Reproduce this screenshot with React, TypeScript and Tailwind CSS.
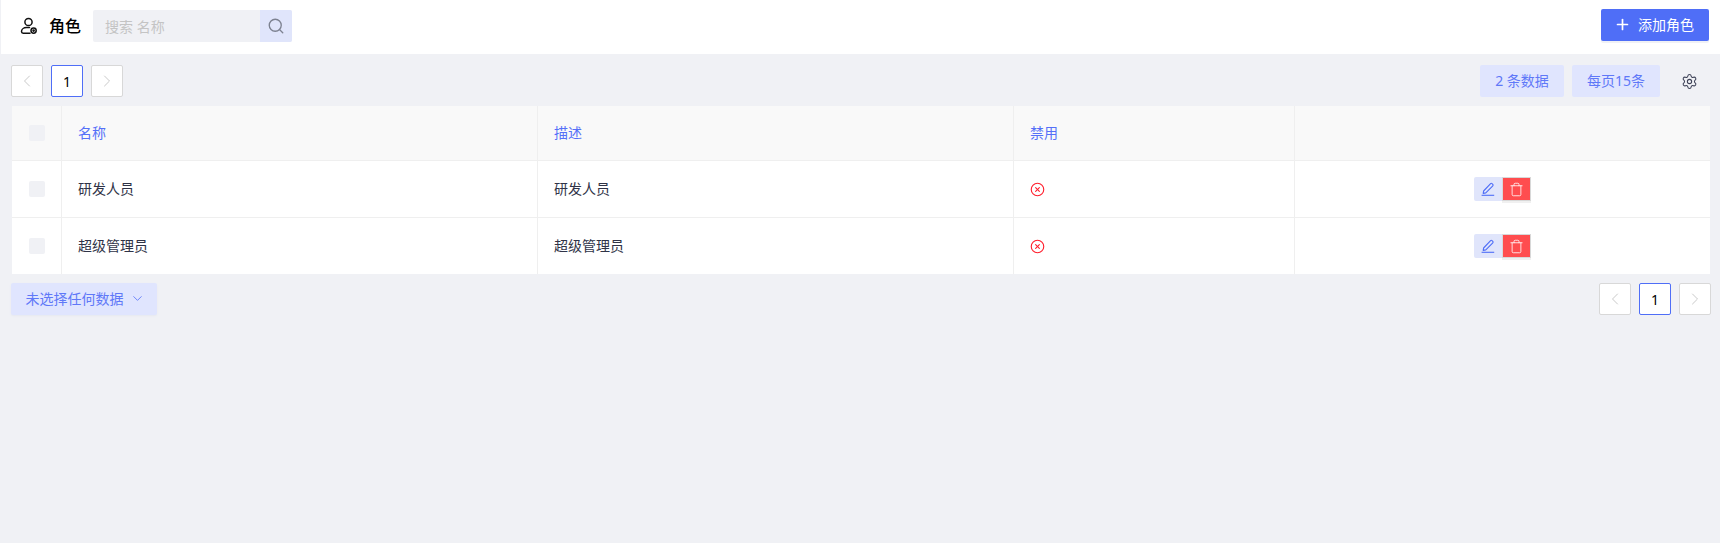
import React from "react";
import { ChevronLeft, ChevronRight, ChevronDown, Search, Settings, Plus, Trash, CircleX } from "lucide-react";

const font = { fontFamily: '"Noto Sans", "Noto Sans CJK SC", sans-serif' };

const RoleIcon = () => (
  <svg width="18" height="18" viewBox="0 0 18 18" fill="none" stroke="#111" strokeWidth="1.5" strokeLinecap="round">
    <circle cx="8.5" cy="5" r="3.6" />
    <path d="M9.5 10.6H6.5C3.6 10.6 1.5 12.4 1.5 14.6c0 1 .7 1.6 1.7 1.6H10" />
    <circle cx="13.6" cy="13.6" r="2.6" />
    <circle cx="13.6" cy="13.6" r=".6" fill="#111" />
  </svg>
);

const EditIcon = () => (
  <svg width="14" height="14" viewBox="0 0 14 14" fill="none" stroke="currentColor" strokeWidth="1.1" strokeLinejoin="round">
    <path d="M2.6 9 9.6 1.6c.4-.4 1-.4 1.4 0l.8.8c.4.4.4 1 0 1.4L4.8 10.9l-2.6.5z" />
    <path d="M.6 13.3h12.6" />
  </svg>
);

const Pager = () => (
  <div className="flex gap-2">
    <div className="w-8 h-8 flex items-center justify-center bg-white border border-[#d8d8d8] rounded-[2px] text-[#c4c4c4]">
      <ChevronLeft size={20} strokeWidth={1.1} />
    </div>
    <div className="w-8 h-8 flex items-center justify-center bg-white border border-[#4f6ef7] rounded-[2px] text-[14px] text-black">
      1
    </div>
    <div className="w-8 h-8 flex items-center justify-center bg-white border border-[#d8d8d8] rounded-[2px] text-[#c4c4c4]">
      <ChevronRight size={20} strokeWidth={1.1} />
    </div>
  </div>
);

const Check = () => (
  <div className="flex items-center justify-center border-r border-[#efefef]">
    <div className="w-4 h-4 rounded-[2px] bg-[#f0f1f5]" />
  </div>
);

const Row = ({ name, last }: { name: string; last?: boolean }) => (
  <div className={`grid grid-cols-[50px_476px_476px_281px_1fr] bg-white text-[14px] text-[#2f3347] ${last ? "h-[56px]" : "h-[57px] border-b border-[#efefef]"}`}>
    <Check />
    <div className="flex items-center px-4 pb-[2px] border-r border-[#efefef]">{name}</div>
    <div className="flex items-center px-4 pb-[2px] border-r border-[#efefef]">{name}</div>
    <div className="flex items-center px-4 border-r border-[#efefef]">
      <CircleX size={15} strokeWidth={1.8} className="text-[#ff1f2d]" />
    </div>
    <div className="flex items-center justify-center">
      <div className="w-7 h-6 flex items-center justify-center bg-[#e0e5fb] rounded-l-[2px] text-[#4f6ef7]">
        <EditIcon />
      </div>
      <div className="w-[29px] h-6 flex items-center justify-center bg-[#ff4d4f] border border-[#d8d8d8] shadow-[0_2px_0_#f0f0f0] text-white">
        <Trash size={15} strokeWidth={1.3} />
      </div>
    </div>
  </div>
);

const App = () => {
  return (
    <div className="w-full h-[543px] bg-[#f0f1f5] overflow-hidden" style={font}>
      <div className="h-[54px] ml-px bg-white flex items-center justify-between pl-[19px] pr-[11px]">
        <div className="flex items-center mb-[2px]">
          <RoleIcon />
          <span className="ml-[11px] text-[16px] font-medium text-black">角色</span>
          <div className="ml-[12px] w-[199px] h-8 flex items-center bg-[#f0f1f5] rounded-[2px] overflow-hidden">
            <span className="flex-1 pl-3 text-[14px] text-[#c4c4c4]">搜索 名称</span>
            <div className="w-8 h-8 flex items-center justify-center bg-[#e0e5fb] text-[#7d8291]">
              <Search size={18} strokeWidth={1.8} />
            </div>
          </div>
        </div>
        <div className="w-[108px] h-8 pb-[2px] mb-1 flex items-center justify-center gap-[7px] pr-[2px] bg-[#4f6ef7] rounded-[2px] shadow-[0_2px_0_#f0f1f5] text-[14px] text-white">
          <Plus size={17} strokeWidth={2.4} />
          添加角色
        </div>
      </div>

      <div className="flex items-center justify-between h-8 mt-[11px] pl-[11px] pr-[11px]">
        <Pager />
        <div className="flex items-center">
          <div className="w-[84px] h-8 pb-[2px] flex items-center justify-center bg-[#e0e5fe] rounded-[2px] text-[14px] text-[#5f78f8]">
            2 条数据
          </div>
          <div className="ml-2 w-[88px] h-8 pb-[2px] flex items-center justify-center bg-[#e0e5fe] rounded-[2px] text-[14px] text-[#5f78f8]">
            每页15条
          </div>
          <div className="w-[49px] flex justify-center pl-[10px] text-[#3f4358]">
            <Settings size={17} strokeWidth={1.5} />
          </div>
        </div>
      </div>

      <div className="ml-3 mr-[10px] mt-[9px]">
        <div className="grid grid-cols-[50px_476px_476px_281px_1fr] h-[55px] bg-[#f9f9f9] border-b border-[#efefef] text-[14px] text-[#5570f8]">
          <Check />
          <div className="flex items-center px-4 pb-[2px] border-r border-[#efefef]">名称</div>
          <div className="flex items-center px-4 pb-[2px] border-r border-[#efefef]">描述</div>
          <div className="flex items-center px-4 pb-[2px] border-r border-[#efefef]">禁用</div>
          <div />
        </div>
        <Row name="研发人员" />
        <Row name="超级管理员" last />
      </div>

      <div className="flex items-center justify-between mt-[9px] pl-[11px] pr-[9px]">
        <div className="w-[146px] h-8 pb-[2px] pl-[2px] flex items-center justify-center gap-[6px] bg-[#e0e5fe] rounded-[2px] shadow-[0_1px_2px_#e6e8f0] text-[14px] text-[#5f78f8]">
          未选择任何数据
          <ChevronDown size={15} strokeWidth={1.4} />
        </div>
        <Pager />
      </div>
    </div>
  );
};

export default App;
